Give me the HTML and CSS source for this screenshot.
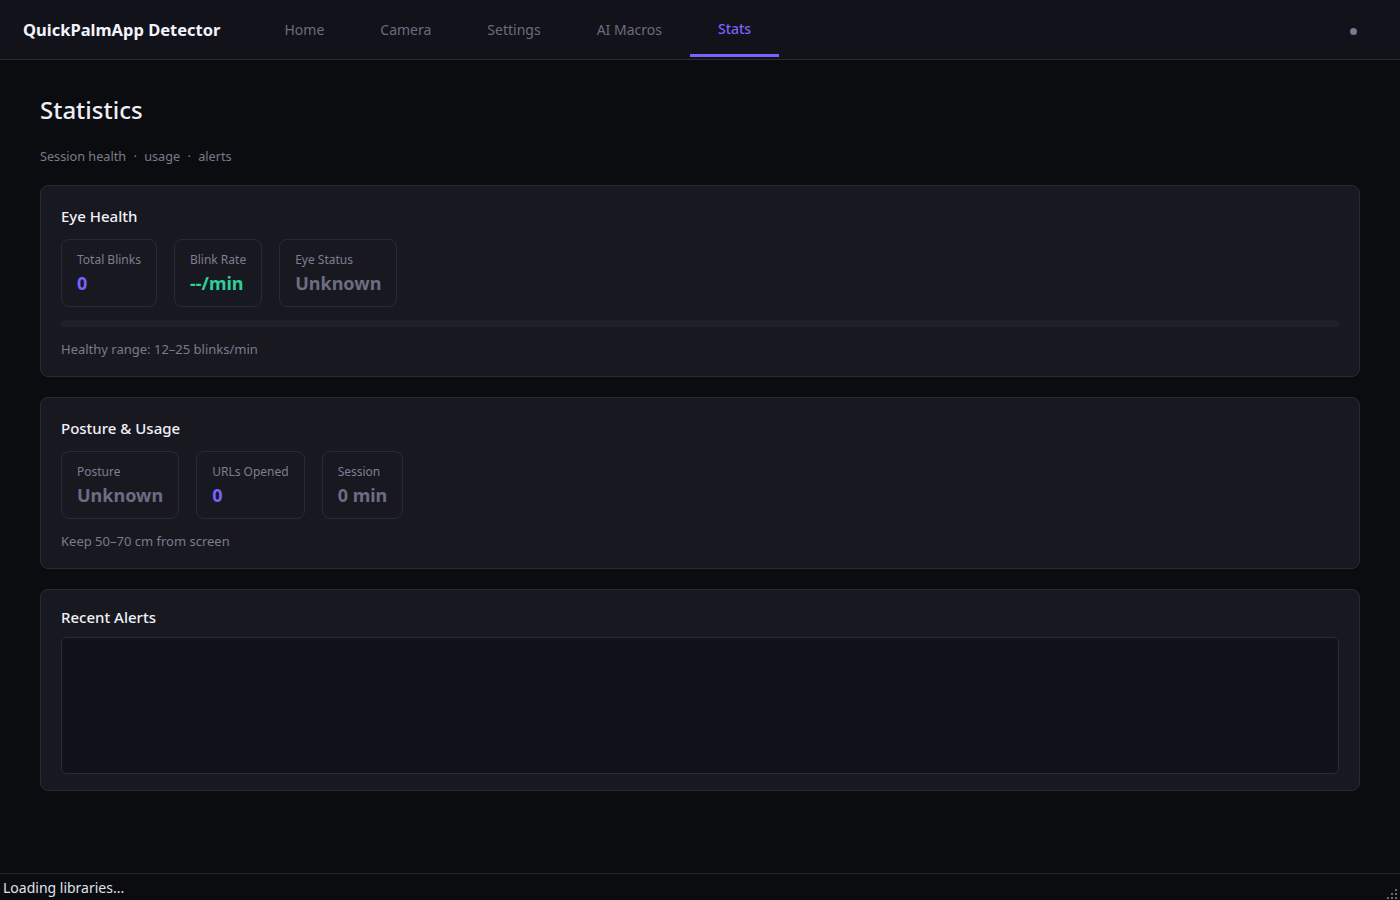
FILE: index.html
```html
<!DOCTYPE html>
<html lang="en">
<head>
  <meta charset="UTF-8" />
  <meta name="viewport" content="width=device-width, initial-scale=1.0"/>
  <title>QuickPalmApp Detector - Stats</title>
  <link rel="stylesheet" href="styles.css">
</head>
<body>

<header class="topo">
  <div class="logo">QuickPalmApp Detector</div>
  <nav class="abas">
    <a class="aba">Home</a>
    <a class="aba">Camera</a>
    <a class="aba">Settings</a>
    <a class="aba">AI Macros</a>
    <a class="aba ativa">Stats</a>
  </nav>
  <span class="ponto"></span>
</header>

<main class="conteudo">
  <h1>Statistics</h1>
  <p class="sub">Session health <span class="sep">·</span> usage <span class="sep">·</span> alerts</p>

  <section class="cartao">
    <h2>Eye Health</h2>
    <div class="caixas">
      <div class="caixa">
        <div class="rotulo">Total Blinks</div>
        <div class="valor roxo">0</div>
      </div>
      <div class="caixa">
        <div class="rotulo">Blink Rate</div>
        <div class="valor verde">--/min</div>
      </div>
      <div class="caixa">
        <div class="rotulo">Eye Status</div>
        <div class="valor cinza">Unknown</div>
      </div>
    </div>
    <div class="barra"><div class="preenche" style="width: 0%"></div></div>
    <p class="nota">Healthy range: 12–25 blinks/min</p>
  </section>

  <section class="cartao">
    <h2>Posture &amp; Usage</h2>
    <div class="caixas">
      <div class="caixa">
        <div class="rotulo">Posture</div>
        <div class="valor cinza">Unknown</div>
      </div>
      <div class="caixa">
        <div class="rotulo">URLs Opened</div>
        <div class="valor roxo">0</div>
      </div>
      <div class="caixa">
        <div class="rotulo">Session</div>
        <div class="valor cinza">0 min</div>
      </div>
    </div>
    <p class="nota">Keep 50–70 cm from screen</p>
  </section>

  <section class="cartao alertas-cartao">
    <h2>Recent Alerts</h2>
    <div class="alertas" id="alertas"></div>
  </section>
</main>

<footer class="status">
  <span>Loading libraries...</span>
  <svg class="grip" width="10" height="10" viewBox="0 0 10 10">
    <rect x="8" y="0" width="2" height="2" fill="#6b6b73"/>
    <rect x="4" y="4" width="2" height="2" fill="#6b6b73"/>
    <rect x="8" y="4" width="2" height="2" fill="#6b6b73"/>
    <rect x="0" y="8" width="2" height="2" fill="#6b6b73"/>
    <rect x="4" y="8" width="2" height="2" fill="#6b6b73"/>
    <rect x="8" y="8" width="2" height="2" fill="#6b6b73"/>
  </svg>
</footer>

</body>
</html>
```

FILE: styles.css
```css
body {
  margin: 0;
  font-family: "Noto Sans", "Open Sans", sans-serif;
  background-color: #0b0c10;
  color: #e6e6ee;
  min-height: 100vh;
}

.topo {
  display: flex;
  align-items: flex-start;
  height: 59px;
  padding: 0 23px;
  background-color: #12121a;
  border-bottom: 1px solid #2a2a34;
}

.logo {
  font-size: 16.5px;
  font-weight: 700;
  color: #f2f4fa;
  margin-right: 36px;
  line-height: 59px;
  height: 59px;
}

.abas {
  display: flex;
}

.aba {
  display: flex;
  align-items: center;
  height: 57px;
  box-sizing: border-box;
  padding: 4px 28px 0;
  font-size: 14px;
  color: #6c6c7c;
  border-bottom: 3px solid transparent;
  cursor: pointer;
}

.aba.ativa {
  color: #7b61ff;
  font-weight: 500;
  border-bottom-color: #7b61ff;
  padding-top: 2px;
}

.ponto {
  margin: 28px 20px 0 auto;
  width: 7px;
  height: 7px;
  border-radius: 50%;
  background-color: #737a93;
}

.conteudo {
  padding: 33px 40px 80px;
}

h1 {
  margin: 0;
  font-size: 24px;
  font-weight: 500;
  color: #eeeef4;
  line-height: 34px;
}

.sub {
  margin: 20px 0;
  font-size: 12.7px;
  color: #7b7b8a;
  line-height: 18px;
}

.sep {
  margin: 0 4px;
}

.cartao {
  background-color: #181821;
  border: 1px solid #2a2a36;
  border-radius: 8px;
  padding: 19px 20px 18px;
  margin-bottom: 20px;
}

h2 {
  margin: 0 0 12px;
  font-size: 15px;
  font-weight: 500;
  color: #f0f0f6;
  line-height: 22px;
}

.caixas {
  display: flex;
  gap: 17px;
}

.caixa {
  border: 1px solid #2a2a36;
  border-radius: 8px;
  padding: 12px 15px 11px;
}

.rotulo {
  font-size: 12px;
  color: #7e7e90;
  line-height: 16px;
  margin-bottom: 3px;
}

.valor {
  font-size: 18px;
  font-weight: 700;
  line-height: 24px;
}

.roxo { color: #7b61ff; }
.verde { color: #2ecf98; }
.cinza { color: #6c6c82; }

.barra {
  margin-top: 13px;
  height: 7px;
  border-radius: 4px;
  background-color: #20202b;
  overflow: hidden;
}

.preenche {
  height: 100%;
  background-color: #7b61ff;
}

.nota {
  margin: 13px 0 0;
  font-size: 13px;
  color: #7b7b8a;
  line-height: 18px;
}

.alertas-cartao {
  padding-top: 16px;
  padding-bottom: 16px;
}

.alertas-cartao h2 {
  margin-bottom: 9px;
}

.alertas {
  height: 135px;
  background-color: #111119;
  border: 1px solid #2a2a36;
  border-radius: 6px;
}

.status {
  position: fixed;
  left: 0;
  right: 0;
  bottom: 0;
  height: 26px;
  display: flex;
  align-items: center;
  justify-content: space-between;
  padding: 0 3px;
  background-color: #0b0c10;
  border-top: 1px solid #26262c;
  font-size: 14px;
  color: #dfe3ea;
}

.grip {
  align-self: flex-end;
  margin-bottom: 1px;
}
```
